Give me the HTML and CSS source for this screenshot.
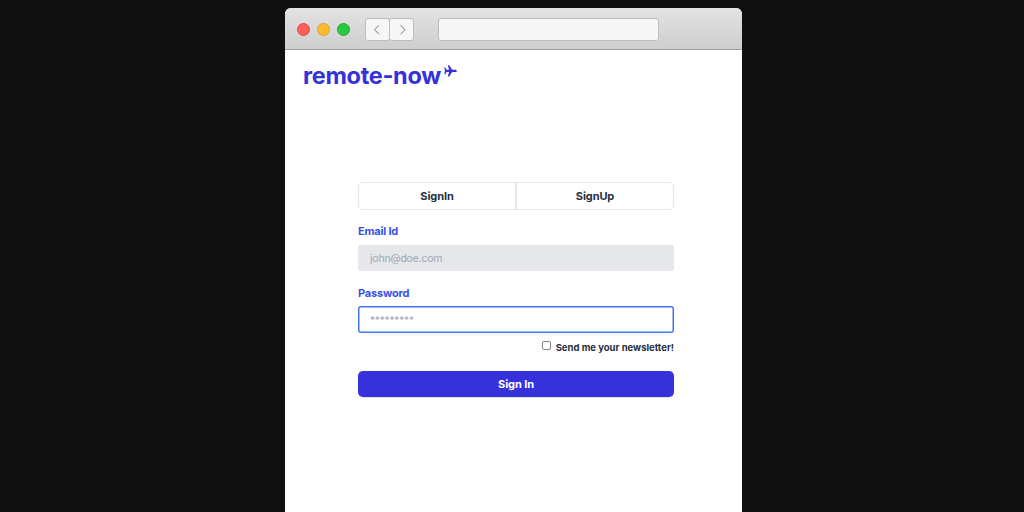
FILE: index.html
```html
<!DOCTYPE html>
<html lang="en">
<head>
<meta charset="utf-8">
<title>remote-now</title>
<link rel="stylesheet" href="styles.css">
</head>
<body>
<div class="window">
  <header class="toolbar">
    <div class="lights">
      <span class="light light-close"></span>
      <span class="light light-minimize"></span>
      <span class="light light-zoom"></span>
    </div>
    <nav class="history">
      <button class="history-button history-back" aria-label="Back"><svg width="8" height="12" viewBox="0 0 8 12"><path d="M6 1.2 1.5 5.7 6 10.2"/></svg></button>
      <button class="history-button" aria-label="Forward"><svg width="8" height="12" viewBox="0 0 8 12"><path d="M1.5 1.2 6 5.7 1.5 10.2"/></svg></button>
    </nav>
    <div class="address"></div>
  </header>
  <main class="page">
    <h1 class="brand"><span class="brand-name">remote-now</span><svg class="plane" width="13" height="12" viewBox="0 0 13 12"><path d="M.2 2.6h1.1L2.6 4.8h2.5L3.8.3h1.5L8.2 4.8h3.2c.8 0 1.4.5 1.4 1.1s-.6 1.1-1.4 1.1H8.2l-2.9 4.5H3.8L5.1 7H2.6L1.3 9.2H.2L1 5.9z"/></svg></h1>
    <form class="form">
      <div class="tabs">
        <button type="button" class="tab">SignIn</button>
        <button type="button" class="tab">SignUp</button>
      </div>
      <label class="label" for="email">Email Id</label>
      <input class="input" id="email" type="email" placeholder="john@doe.com">
      <label class="label" for="password">Password</label>
      <input class="input input-active" id="password" type="password" placeholder="*********">
      <label class="newsletter"><input class="checkbox" type="checkbox"><span>Send me your newsletter!</span></label>
      <button type="button" class="submit">Sign In</button>
    </form>
  </main>
</div>
</body>
</html>
```
FILE: styles.css
```css
* { box-sizing: border-box; }
body {
  margin: 0;
  height: 512px;
  overflow: hidden;
  padding: 8px 0 0 285px;
  background: #101010;
  font-family: Inter, "Liberation Sans", sans-serif;
}
button, input { font-family: inherit; margin: 0; }
.window {
  width: 457px;
  height: 504px;
  background: #fff;
  border-radius: 6px 6px 0 0;
  overflow: hidden;
}
.toolbar {
  display: flex;
  align-items: center;
  height: 42px;
  padding: 1px 0 0 12px;
  background: linear-gradient(#e3e3e3, #cecece);
  border-bottom: 1px solid #9e9e9e;
}
.lights { display: flex; gap: 7px; width: 68px; }
.light { width: 13px; height: 13px; border-radius: 50%; border: 1px solid; }
.light-close { background: #ff5f57; border-color: #dc4b43; }
.light-minimize { background: #ffbd2e; border-color: #d99e2b; }
.light-zoom { background: #28ca42; border-color: #20a735; }
.history { display: flex; width: 73px; }
.history-button {
  display: flex;
  align-items: center;
  justify-content: center;
  width: 25px;
  height: 23px;
  padding: 1px 0 0;
  border: 1px solid #bdbdbd;
  border-radius: 3px;
  background: #f7f7f7;
}
.history-button + .history-button { margin-left: -1px; padding-left: 2px; }
.history-back { padding-right: 2px; }
.history-button path { fill: none; stroke: #777; stroke-width: 1; }
.address {
  width: 221px;
  height: 23px;
  border: 1px solid #bdbdbd;
  border-radius: 3px;
  background: #f7f7f7;
}
.page { padding: 11px 68px 0 18px; }
.brand {
  display: flex;
  align-items: flex-start;
  gap: 3px;
  height: 30px;
  margin: 0;
  color: #3532db;
  font-size: 23.5px;
  line-height: 29px;
  font-weight: 650;
  letter-spacing: -.3px;
}
.plane { margin-top: 4px; fill: currentColor; }
.form {
  display: flex;
  flex-direction: column;
  width: 316px;
  margin: 91px 0 0 55px;
}
.tabs { display: flex; height: 28px; }
.tab {
  flex: 1;
  padding: 0;
  border: 1px solid #e5e7eb;
  background: #fff;
  color: #252f3f;
  font-size: 11px;
  font-weight: 650;
  letter-spacing: -.1px;
}
.tab:first-child { border-radius: 5px 0 0 5px; }
.tab:last-child { border-radius: 0 5px 5px 0; }
.label {
  margin: 13.3px 0 5.7px;
  height: 16px;
  color: #3551e9;
  font-size: 11px;
  line-height: 16px;
  font-weight: 650;
  letter-spacing: -.2px;
}
.input {
  height: 26.4px;
  padding: 0 12px;
  border: 0;
  border-radius: 3px;
  background: #e5e7eb;
  font-size: 10.5px;
  letter-spacing: -.2px;
  outline: none;
}
.input::placeholder { color: #a0a6b4; opacity: 1; }
.input-active {
  background: #fff;
  box-shadow: inset 0 0 0 1.5px #3f76f0;
  font-size: 10px;
  letter-spacing: -.15px;
}
.newsletter {
  display: flex;
  justify-content: flex-end;
  gap: 5px;
  height: 37.8px;
  padding-top: 8px;
  color: #252f3f;
  font-size: 9.5px;
  line-height: 14px;
  font-weight: 650;
}
.checkbox {
  appearance: none;
  width: 9px;
  height: 9px;
  border: 1px solid #858585;
  border-radius: 2px;
}
.submit {
  height: 26.5px;
  padding: 0;
  border: 0;
  border-radius: 5px;
  background: #3532db;
  color: #fff;
  font-size: 11px;
  font-weight: 650;
  letter-spacing: -.1px;
  box-shadow: 0 1px 1px rgba(0, 0, 0, .12);
}
```
